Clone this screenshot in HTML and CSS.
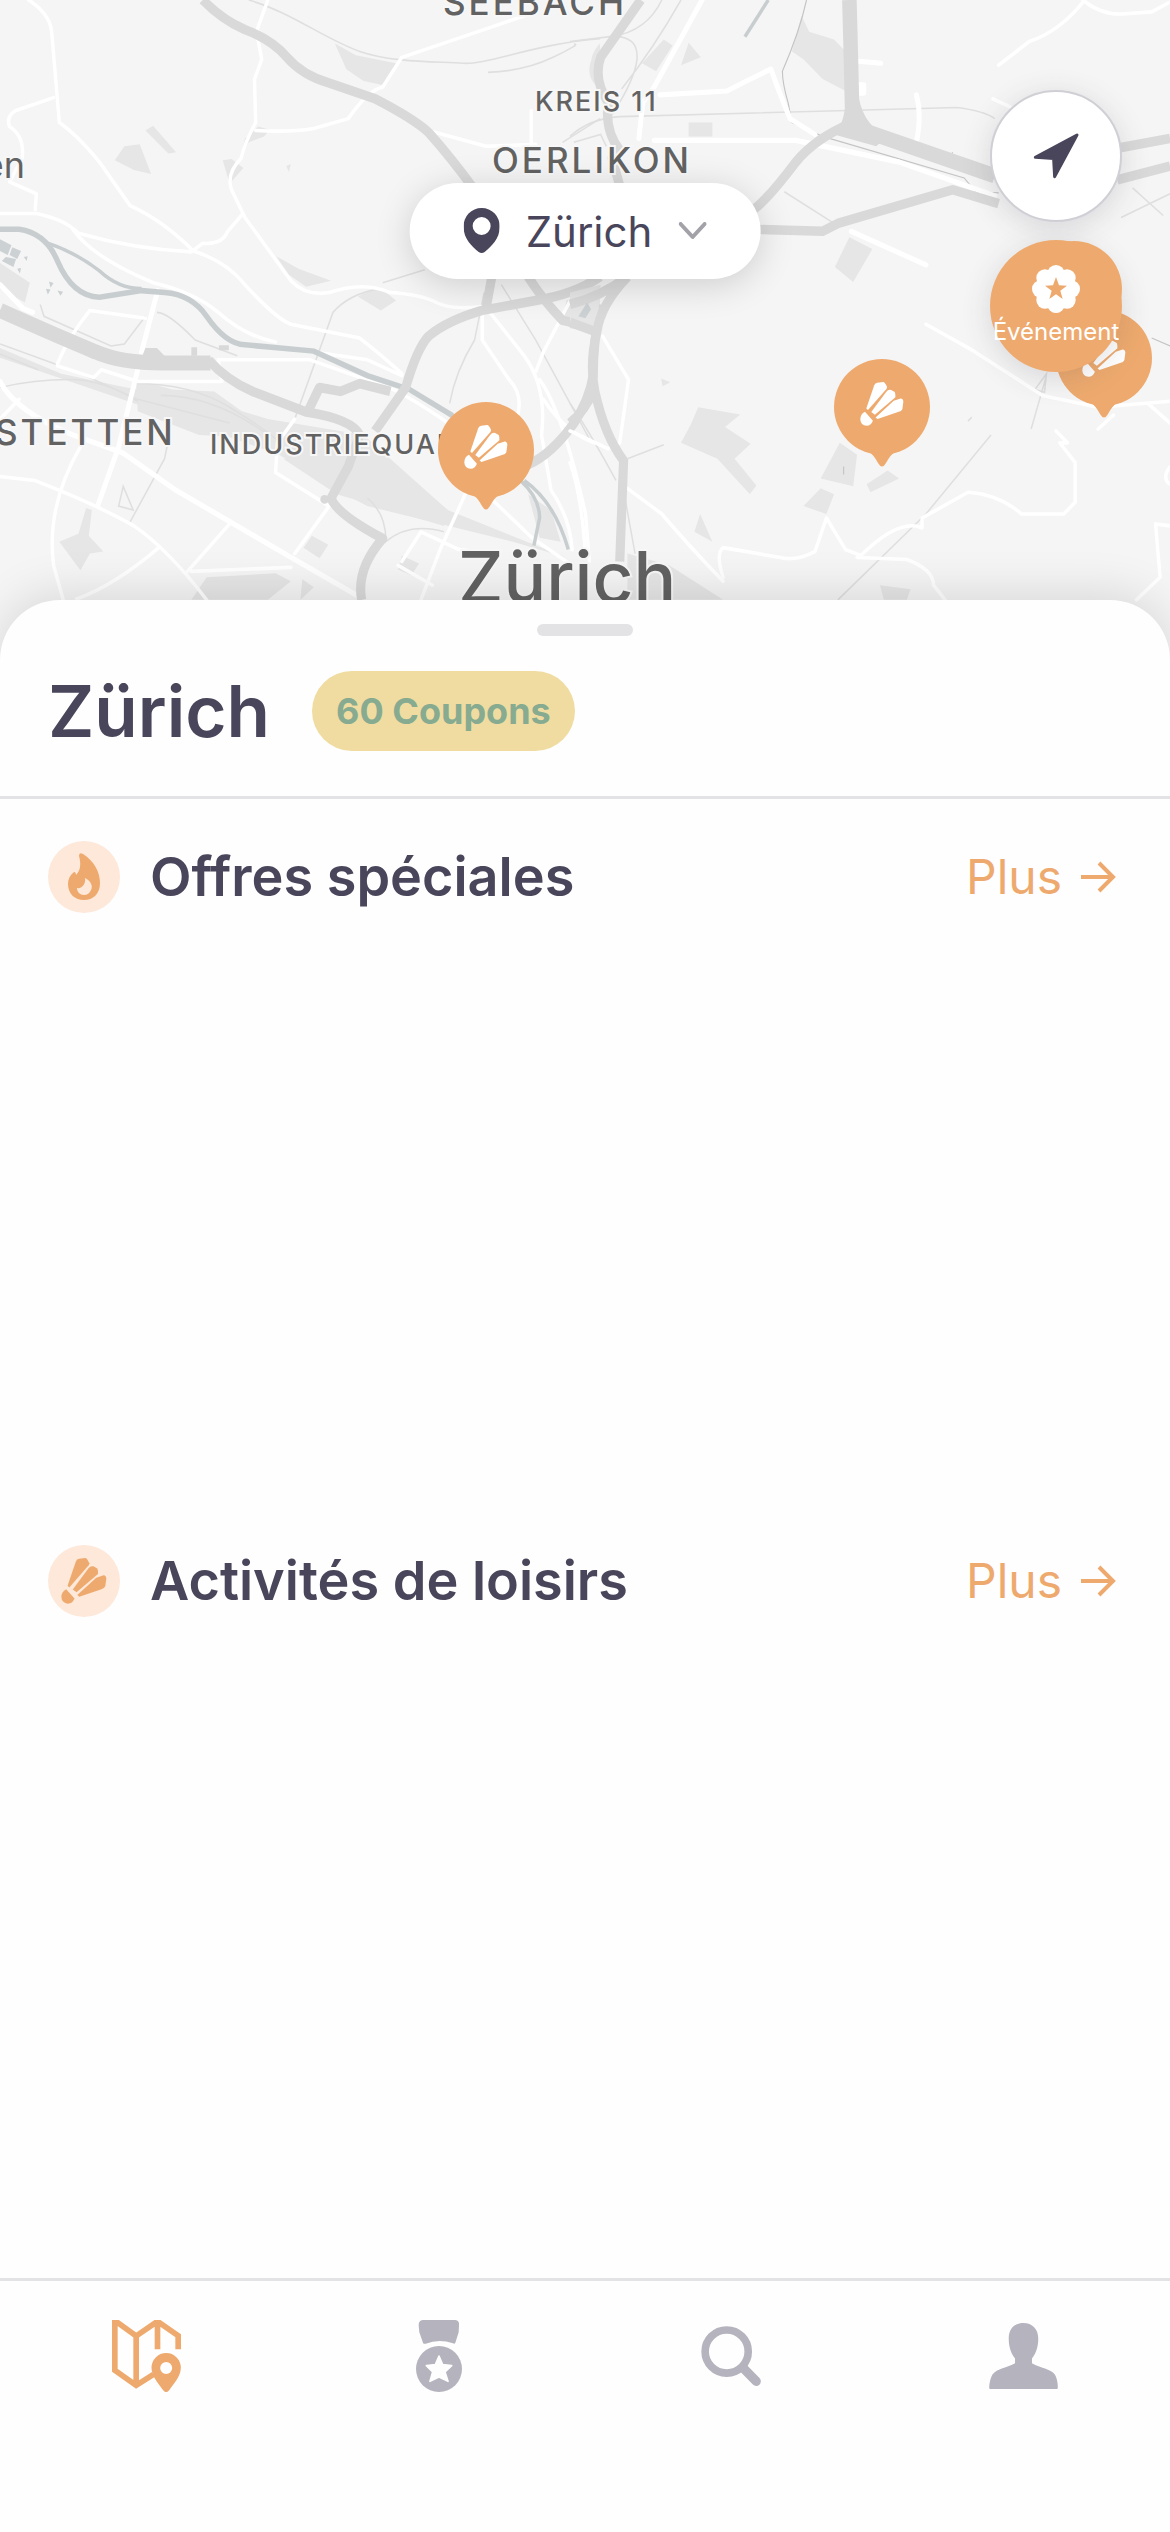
FILE: index.html
```html
<!DOCTYPE html>
<html lang="fr">
<head>
    <meta charset="UTF-8">
    <meta name="viewport" content="width=device-width, initial-scale=1.0">
    <title>Zürich</title>

    <link rel="stylesheet" href="styles.css">
</head>
<body>
    <!-- Shared icons -->
    <svg class="symbols" aria-hidden="true">
        <symbol id="shuttle" viewBox="134 137 131 133">
            <path d="M152 217 L176 147 Q179 140 185 139 L203 137 Q208 137 215 152 L213 158 L157 222 Z"/>
            <path d="M167 228 L212 167 Q218 159 227 161 L238 167 Q241 173 240 183 L178 236 Z"/>
            <path d="M180 244 L235 194 L256 187 Q264 188 264 197 L261 219 Q258 225 250 227 L186 249 Z"/>
            <path d="M148 227 L172 254 Q166 269 153 269 Q135 267 134 250 Q134 234 148 227 Z"/>
        </symbol>
        <symbol id="markerShape" viewBox="0 0 96 108">
            <circle cx="48" cy="48" r="48"/>
            <path d="M32 90 Q40 96 44 104 Q48 111 52 104 Q56 96 64 90 Z"/>
        </symbol>
        <symbol id="arrow" viewBox="0 0 36 32">
            <path d="M1 16 H33 M19 2 L33 16 L19 30" fill="none" stroke="currentColor" stroke-width="4"/>
        </symbol>
    </svg>

    <main class="mapArea">
        <svg class="map" viewBox="0 0 1170 660" preserveAspectRatio="xMidYMin slice" aria-label="Carte de Zürich">
            <!-- West side -->
            <g transform="scale(.3827 .3954)">
                <g class="area">
                    <path d="M875 110 L930 140 L1035 160 L1000 215 L950 205 L905 175 Z"/>
                    <path d="M300 405 L325 370 L365 365 L395 440 L350 430 Z M380 330 L400 318 L460 385 L440 388 Z"/>
                    <path d="M640 350 L675 320 L705 328 L690 345 L650 360 L632 388 Z M582 405 L605 402 L636 425 L600 465 Z M748 420 L760 415 L755 435 Z"/>
                    <path d="M722 648 L780 680 L865 710 L800 725 L755 695 Z M935 750 L990 725 L1035 760 L995 785 Z"/>
                    <path d="M0 665 L78 715 L65 765 L0 730 Z M0 880 L160 945 L330 980 L500 1000 L700 1060 L950 1100 L1170 1290 L1480 1410 L1340 1370 L1130 1320 L960 1280 L840 1220 L730 1150 L350 1020 L0 905 Z"/>
                    <path d="M355 960 L450 985 L560 990 L660 1060 L720 1110 L520 1100 L360 1040 Z M740 1160 L900 1175 L1050 1200 L1170 1290 L1160 1330 L880 1250 Z"/>
                    <path d="M225 1285 L240 1290 L232 1355 L270 1395 L235 1400 L210 1442 L155 1370 L205 1350 Z M815 1355 L858 1378 L835 1412 L793 1385 Z M1050 1405 L1095 1425 L1075 1455 L1040 1440 Z"/>
                    <path d="M500 1517 L540 1460 L720 1450 L760 1470 L700 1517 Z M790 1465 L820 1485 L785 1517 Z M1380 1250 L1440 1290 L1465 1370 L1410 1360 Z"/>
                    <path d="M1568 110 C1535 140 1535 200 1568 225 Z M1480 760 L1568 720 V840 L1470 820 Z"/>
                </g>
                <g class="rail">
                    <path d="M650 0 C760 30 850 100 940 130 S1150 155 1210 160 S1400 110 1568 98"/>
                    <path d="M1275 183 Q1370 180 1445 145 T1500 112 M1470 360 L1568 300 M1000 715 L1110 682"/>
                    <path d="M0 870 L200 940 L360 1010 L600 1070 M0 895 L100 935 M0 980 Q90 960 180 960 T360 1015 M105 770 L115 800 L290 875 L325 870 L380 800 M410 790 Q440 790 510 860 L620 900"/>
                    <path d="M350 970 Q500 970 600 1030 T720 1110 M420 1000 Q560 1000 700 1100 M770 1060 L870 790 Q910 745 990 730 M1175 1020 Q1190 940 1240 860 L1265 740 M1310 720 L1400 860 L1540 1110 M445 1090 L430 1160 L340 1320 M960 1260 Q1010 1300 1008 1370 Q1070 1320 1160 1345"/>
                    <path d="M322 1230 L348 1290 L310 1280 Z"/>
                </g>
                <g class="road">
                    <path d="M75 0 Q130 35 135 80 L155 310 Q200 340 260 410 L340 520 Q430 560 505 635 Q590 660 640 720 Q720 805 760 820 L940 855 Q1000 900 1050 945"/>
                    <path d="M140 247 L40 280 Q15 295 25 320 Q65 345 58 400 L25 460 L95 490 L92 530"/>
                    <path d="M700 0 L670 80 L684 150 L665 200 L668 310 Q640 360 630 400 Q590 440 605 480 L640 550 L760 710 Q800 750 860 740 Q950 710 1020 740 Q1100 745 1140 765 T1260 775"/>
                    <path d="M668 330 Q760 335 820 325 L910 300 Q960 230 1000 220 L1050 145 L1280 70 L1370 40 M1100 325 L1270 370 L1400 365 M1388 280 V370"/>
                    <path d="M0 540 H95 Q170 555 205 590 Q350 630 500 637 L530 615 Q580 620 595 585 L635 540"/>
                    <path d="M190 580 Q240 650 400 715 Q510 740 570 790 Q640 850 720 865 M820 890 L960 910 L1050 950"/>
                    <path class="wide" d="M412 735 L370 890 M370 895 L310 1130 L255 1280 M0 720 L60 780 L85 790"/>
                    <path d="M150 920 Q180 850 235 785 L380 805 M150 925 L245 955 L265 935 L360 965 H580 L570 910 H810 Q930 950 1040 990 Q1150 1050 1240 1120"/>
                    <path class="wide" d="M0 965 Q40 1040 190 1100 L320 1145 L460 1240 L770 1415 L940 1510"/>
                    <path d="M0 1205 L90 1215 Q250 1275 350 1330 Q440 1390 540 1517 M210 1130 Q120 1280 140 1430 L165 1517 M200 1515 Q300 1480 415 1385 M500 1445 L760 1435 M490 1445 L600 1325 M770 1400 L860 1280 L720 1195 L725 1120 L770 1060"/>
                    <path d="M1225 1230 L1150 1390 L1100 1517 M1050 1420 L1100 1345 L1200 1390 L1290 1400 M1040 1430 L1130 1480 M1250 1230 L1390 1360 L1480 1420 M0 1060 L50 1010"/>
                    <path d="M1260 790 L1260 860 L1330 960 Q1370 1000 1350 1060 M1280 790 L1370 900 Q1430 980 1415 1100 L1440 1240 Q1490 1310 1495 1390 M1490 760 L1420 890 L1400 940 M1410 960 Q1470 1040 1530 1300 L1540 1420 M1420 1010 Q1480 1100 1568 1125"/>
                </g>
                <g class="water">
                    <path class="river" d="M0 580 H50 Q120 590 150 660 Q190 750 260 752 L370 735 L430 740 Q500 745 540 800 Q590 870 640 872 L820 888 L960 950 L1070 985 L1180 1050 Q1290 1130 1360 1215"/>
                    <path d="M125 615 Q200 640 260 685 Q310 730 370 730 M1360 1215 Q1410 1260 1410 1310 L1395 1380 M1370 1215 Q1450 1270 1485 1390" class="branch"/>
                    <path class="pond" d="M0 605 L30 620 L20 645 L0 635 Z M32 625 L55 635 L45 655 L25 645 Z M15 650 L42 655 L35 675 L5 660 Z M62 650 L72 648 L70 660 Z M45 680 L55 678 L52 692 Z M128 712 L140 716 L132 728 Z M120 730 L132 732 L125 745 Z M150 735 L165 738 L158 748 Z M1525 775 L1542 785 L1520 805 Z"/>
                </g>
                <g class="motorway">
                    <path class="big" d="M530 0 Q580 50 640 75 Q710 100 750 145 Q790 190 860 210 L980 250 Q1080 300 1120 335 Q1180 400 1240 480"/>
                    <path class="huge" d="M0 785 Q150 850 250 890 Q320 920 440 918 H550"/>
                    <path class="big" d="M545 910 Q590 960 660 990 L800 1042 Q920 1060 940 1100 L910 1180 L865 1260 Q880 1300 1000 1362 Q930 1440 945 1517"/>
                    <path class="big" d="M805 1040 L835 980 L890 990 L940 970 L1020 990 M980 1090 L1060 980 Q1090 880 1120 850 Q1170 810 1260 785 L1400 760 Q1500 745 1568 700 M1285 700 L1270 780 M1380 700 Q1420 760 1470 810 L1568 830 M1568 770 Q1550 870 1550 950 Q1540 1010 1500 1070 Q1440 1150 1380 1175"/>
                    <circle cx="848" cy="1263" r="11"/>
                    <path d="M380 880 L410 880 L435 905 H370 Z M500 878 H515 V900 H500 Z M572 873 H598 V886 H572 Z"/>
                </g>
            </g>

            <!-- East side -->
            <g transform="translate(570) scale(.3827 .3954)">
                <g class="area">
                    <path d="M605 40 L625 80 L690 100 L720 130 V230 L660 200 L610 150 L580 130 Z M245 100 L268 115 L225 180 L188 160 Z M310 108 L342 145 L290 165 Z M310 310 H372 V345 H310 Z"/>
                    <path d="M730 600 L790 630 L740 713 L692 675 Z M335 1030 L445 1048 L405 1080 L472 1122 L430 1160 L487 1228 L470 1250 L385 1160 L290 1120 L315 1075 Z"/>
                    <path d="M705 1120 L750 1150 L740 1230 L655 1210 Z M775 1225 L830 1190 L860 1210 L785 1245 Z M655 1235 L690 1250 L670 1300 L610 1280 Z M340 1300 L372 1370 L325 1345 Z M810 1480 L890 1490 L880 1517 H820 Z"/>
                    <path d="M75 130 C45 150 40 200 75 220 Z M0 740 L80 720 L70 840 L0 830 Z M238 957 L262 967 L242 977 Z M150 1400 L260 1430 L400 1517 H150 Z"/>
                </g>
                <g class="rail">
                    <path d="M0 105 L110 92 Q200 80 240 0 M290 0 Q220 120 135 225 M110 92 Q180 90 175 150 Q170 200 110 290 M0 345 Q50 300 130 295 L700 280 L1010 272 Q1080 280 1110 300 M10 360 L80 340 L95 370 M560 485 L690 565"/>
                    <path d="M700 1517 L930 1300 L1100 1100 M1205 1085 L1245 950 M1245 945 L1215 985 L1240 992 Z M1440 550 L1568 490 M1470 475 L1550 545 M0 1020 Q50 1090 120 1215 M150 1160 L245 1125 M1040 1065 L1050 1055 M140 1240 L170 1400"/>
                    <path class="dark" d="M618 0 Q600 80 555 180 Q555 210 570 260 L580 310 L660 345 L1030 450 L1060 485 L1120 488 M1520 855 L1568 875 M1000 385 L990 400 M715 1180 V1200"/>
                </g>
                <g class="road">
                    <path class="wide" d="M345 0 L220 220 L190 260 L180 350 M235 240 L410 230 Q470 200 525 175 Q545 230 575 300 L640 340"/>
                    <path class="wide" d="M220 355 L590 355 L860 410 L1110 495 M905 240 Q920 290 905 360 M755 155 L812 160 M735 585 L930 670"/>
                    <path d="M1345 0 Q1280 80 1200 105 L1120 165 M1340 0 Q1390 40 1450 35 L1520 30 L1568 5 M1105 250 L1150 270"/>
                    <path d="M930 820 L1050 885 L1235 1000 L1380 1030 L1568 1015 M1510 1020 L1568 1070 M1380 1085 L1420 1050 M1270 1090 L1300 1120 L1280 1120 L1320 1170 V1270 L1290 1300 H1180 Q1120 1250 1040 1245 L920 1310 V1335 Q860 1310 760 1405 L720 1390 L670 1310 L640 1395 Q590 1420 550 1410 L400 1385 Q380 1400 400 1460 M750 1410 L880 1415 Q950 1440 950 1480 L980 1517"/>
                    <path d="M0 1090 L100 1135 L130 1120 L153 960 L85 850 M0 1170 Q30 1250 40 1400 M150 1235 L240 1300 Q310 1380 400 1470 M1568 1330 L1530 1325 L1542 1460 L1480 1517 M1568 1180 Q1545 1210 1568 1225"/>
                    <rect x="748" y="208" width="26" height="34" rx="6" class="block"/>
                </g>
                <g class="motorway">
                    <path class="big" d="M185 0 Q120 90 80 145 Q60 200 100 260 Q90 330 130 380 L110 400 L130 470"/>
                    <path class="huge" d="M730 0 Q735 170 738 320 L1110 445"/>
                    <path class="big" d="M738 310 Q640 350 590 410 Q520 500 480 530 M480 580 L660 585 L700 565 L1000 480 L1120 515"/>
                    <path d="M722 250 L755 250 Q770 320 830 345 L800 370 L690 340 Q715 320 722 250 Z"/>
                    <path class="big" d="M1430 375 L1568 350 M1430 455 L1568 420"/>
                    <path class="big" d="M0 770 Q80 750 150 700 M150 700 Q80 770 70 840 Q50 920 65 990 Q90 1100 140 1165 L130 1420 M70 840 L0 815 M65 980 Q40 1040 0 1070"/>
                </g>
                <g class="water">
                    <path d="M518 0 L457 93" class="branch"/>
                    <path class="pond" d="M45 765 L55 782 L40 805 L22 800 Z"/>
                </g>
            </g>

            <g class="mapLabels">
                <text x="443" y="15" class="district">SEEBACH</text>
                <text x="535" y="111" class="quarter">KREIS 11</text>
                <text x="492" y="173" class="district">OERLIKON</text>
                <text x="-5" y="445" class="district">STETTEN</text>
                <text x="25" y="178" class="town" text-anchor="end">en</text>
                <text x="210" y="454" class="quarter">INDUSTRIEQUAR</text>
                <text x="458" y="603" class="city">Zürich</text>
            </g>
        </svg>

        <button class="marker markerIndustrie" aria-label="Activité de loisirs">
            <svg class="markerBack"><use href="#markerShape"/></svg>
            <svg class="markerIcon"><use href="#shuttle"/></svg>
        </button>
        <button class="marker markerForest" aria-label="Activité de loisirs">
            <svg class="markerBack"><use href="#markerShape"/></svg>
            <svg class="markerIcon"><use href="#shuttle"/></svg>
        </button>
        <button class="marker markerEast" aria-label="Activité de loisirs">
            <svg class="markerBack"><use href="#markerShape"/></svg>
            <svg class="markerIcon"><use href="#shuttle"/></svg>
        </button>

        <button class="cityPicker">
            <svg class="pinIcon" viewBox="0 0 36 46">
                <path fill-rule="evenodd" d="M18 0 A18 18 0 0 1 36 19 C36 31 28 38 21 44 Q18 46 15 44 C8 38 0 31 0 19 A18 18 0 0 1 18 0 Z M18 9 A9 9 0 1 0 18 27 A9 9 0 1 0 18 9 Z"/>
            </svg>
            <span>Zürich</span>
            <svg class="chevron" viewBox="0 0 28 18">
                <path d="M2 2 L14 15 L26 2"/>
            </svg>
        </button>

        <div class="mapButtons">
            <button class="roundButton locate" aria-label="Ma position">
                <svg class="locateIcon" viewBox="220 190 136 136">
                    <path d="M350 196 L284 319 L281 265 L227 262 Z"/>
                </svg>
            </button>
            <button class="roundButton event">
                <svg class="eventIcon" viewBox="-72 -72 144 144">
                    <circle r="60"/>
                    <circle cx="0" cy="-46" r="26"/>
                    <circle cx="33" cy="-33" r="26"/>
                    <circle cx="46" cy="0" r="26"/>
                    <circle cx="33" cy="33" r="26"/>
                    <circle cx="0" cy="46" r="26"/>
                    <circle cx="-33" cy="33" r="26"/>
                    <circle cx="-46" cy="0" r="26"/>
                    <circle cx="-33" cy="-33" r="26"/>
                    <path class="eventStar" d="M0 -36 L9 -11 L33 -10 L13 5 L20 30 L0 16 L-20 30 L-13 5 L-33 -10 L-9 -11 Z"/>
                </svg>
                <span>Événement</span>
            </button>
        </div>
    </main>

    <div class="sheet">
        <div class="handle"></div>
        <header class="sheetHeader">
            <h1>Zürich</h1>
            <span class="badge">60 Coupons</span>
        </header>

        <section class="category">
            <div class="categoryHeader">
                <span class="categoryIcon">
                    <svg class="flame" viewBox="0 0 72 72">
                        <path fill-rule="evenodd" d="M31 15 Q31 11 35 13 C46 20 52 31 52 42 C52 53 45 59 36 59 C26 59 20 52 20 43 C20 38 22 34 26 31 Q28 31 28 34 C33 29 33 22 31 15 Z M37 37 C43 40 45 45 43 49 C42 52 39 54 36 54 C32 54 29 51 29 47 C34 48 38 43 37 37 Z"/>
                    </svg>
                </span>
                <h2>Offres spéciales</h2>
                <a class="more" href="#">Plus <svg class="arrow"><use href="#arrow"/></svg></a>
            </div>
        </section>

        <section class="category">
            <div class="categoryHeader">
                <span class="categoryIcon">
                    <svg class="categoryShuttle"><use href="#shuttle"/></svg>
                </span>
                <h2>Activités de loisirs</h2>
                <a class="more" href="#">Plus <svg class="arrow"><use href="#arrow"/></svg></a>
            </div>
        </section>
    </div>

    <nav class="tabBar">
        <a class="tab active" href="#" aria-label="Carte">
            <svg width="69" height="72" viewBox="66 90 206 216">
                <path class="line" d="M74 80 V241 L138 286 L190 253 M66 86 L138 138 V286 M138 138 L202 94 V178 M202 94 L264 137 V178"/>
                <path fill-rule="evenodd" d="M228 189 A44 44 0 0 1 272 234 C271 262 249 282 237 301 Q228 312 219 301 C207 282 185 262 184 234 A44 44 0 0 1 228 189 Z M228 216 A18 18 0 1 0 228 252 A18 18 0 1 0 228 216 Z"/>
            </svg>
        </a>
        <a class="tab" href="#" aria-label="Récompenses">
            <svg width="46" height="72" viewBox="978 90 138 216">
                <path d="M998 90 H1096 Q1109 92 1107 106 L1106 127 L1096 158 Q1094 163 1089 160 Q1047 145 1007 161 Q1001 163 999 158 L988 127 L986 106 Q986 91 998 90 Z"/>
                <circle cx="1047" cy="237" r="69"/>
                <path class="star" d="M1047 198 L1058 224 L1085 227 L1065 246 L1074 274 L1047 261 L1020 274 L1028 246 L1009 227 L1036 224 Z"/>
            </svg>
        </a>
        <a class="tab" href="#" aria-label="Recherche">
            <svg width="60" height="60" viewBox="93 107 180 181">
                <circle class="lens" cx="170" cy="184" r="65"/>
                <path class="lensHandle" d="M222 236 L259 274"/>
            </svg>
        </a>
        <a class="tab" href="#" aria-label="Profil">
            <svg width="69" height="66" viewBox="960 98 207 199">
                <path d="M1063 98 C1090 98 1108 116 1108 145 C1108 171 1101 190 1089 205 V219 C1115 234 1145 235 1158 253 Q1167 268 1167 293 Q1167 297 1163 297 H964 Q960 297 960 293 Q961 268 970 253 C983 235 1015 232 1038 219 V205 C1026 190 1019 171 1019 145 C1019 116 1036 98 1063 98 Z"/>
            </svg>
        </a>
    </nav>
</body>
</html>
```
FILE: styles.css
```css
*{
    box-sizing: border-box;
}

body{
    margin: 0;
    min-height: 100vh;
    display: flex;
    flex-direction: column;
    background: #fefefe;
    color: #49465b;
    font-family: Inter, Roboto, sans-serif;
}

button{
    border: none;
    padding: 0;
    font-family: inherit;
    color: inherit;
    cursor: pointer;
}

a{
    text-decoration: none;
}

.symbols{
    position: absolute;
    width: 0;
    height: 0;
}

/* Map */
.mapArea{
    position: relative;
    height: 660px;
    overflow: hidden;
    background: #f5f5f5;
}

.map{
    display: block;
    width: 100%;
    height: 100%;
}

.area{
    fill: #e6e6e6;
}

.rail{
    fill: none;
    stroke: #dfdfdf;
    stroke-width: 4px;
}

.rail .dark{
    stroke: #c4c4c4;
    stroke-width: 3px;
}

.road{
    fill: none;
    stroke: #ffffff;
    stroke-width: 9px;
    stroke-linejoin: round;
    stroke-linecap: round;
}

.road .wide{
    stroke-width: 13px;
}

.road .block{
    fill: #ffffff;
    stroke: none;
}

.motorway{
    fill: #d9d9d9;
}

.motorway .big{
    fill: none;
    stroke: #d9d9d9;
    stroke-width: 24px;
    stroke-linejoin: round;
}

.motorway .huge{
    fill: none;
    stroke: #d9d9d9;
    stroke-width: 38px;
}

.water{
    fill: none;
    stroke: #c8ced0;
}

.water .river{
    stroke-width: 14px;
}

.water .branch{
    stroke-width: 9px;
}

.water .pond{
    fill: #ccd1d3;
    stroke: none;
}

.mapLabels{
    fill: #626262;
    stroke: #f7f7f7;
    stroke-width: 4px;
    paint-order: stroke;
    font-weight: 500;
}

.district{
    font-size: 35px;
    letter-spacing: 3px;
}

.quarter{
    font-size: 27px;
    letter-spacing: 2px;
}

.town{
    font-size: 36px;
    font-weight: 400;
}

.city{
    font-size: 71px;
}

.marker{
    position: absolute;
    width: 96px;
    height: 108px;
    background: none;
}

.markerBack{
    display: block;
    width: 96px;
    height: 108px;
    fill: #eeaa6e;
}

.markerIcon{
    position: absolute;
    left: 26px;
    top: 23px;
    width: 44px;
    height: 44px;
    fill: #ffffff;
}

.markerIndustrie{
    left: calc(50% - 147px);
    top: 402px;
}

.markerForest{
    left: calc(50% + 249px);
    top: 359px;
}

.markerEast{
    left: calc(50% + 471px);
    top: 310px;
}

.cityPicker{
    position: absolute;
    top: 183px;
    left: 50%;
    transform: translateX(-50%);
    display: flex;
    align-items: center;
    height: 96px;
    padding: 0 54px;
    border-radius: 48px;
    background: #ffffff;
    box-shadow: 0 6px 36px rgba(0, 0, 0, 0.16);
    font-size: 42px;
    gap: 26px;
}

.pinIcon{
    width: 36px;
    height: 46px;
    fill: #49465b;
}

.chevron{
    width: 28px;
    height: 18px;
    fill: none;
    stroke: #a3a2a8;
    stroke-width: 4px;
    stroke-linecap: round;
    stroke-linejoin: round;
}

.mapButtons{
    position: absolute;
    top: 90px;
    right: 48px;
    display: flex;
    flex-direction: column;
    gap: 18px;
}

.roundButton{
    display: flex;
    flex-direction: column;
    align-items: center;
    justify-content: center;
    width: 132px;
    height: 132px;
    border-radius: 50%;
    box-shadow: 0 6px 30px rgba(60, 60, 80, 0.16);
}

.locate{
    border: 2px solid #cfcfd5;
    background: #ffffff;
}

.locateIcon{
    width: 46px;
    height: 46px;
    fill: #49465b;
    stroke: #49465b;
    stroke-width: 9px;
    stroke-linejoin: round;
}

.event{
    position: relative;
    isolation: isolate;
    background: #eeaa6e;
    color: #ffffff;
    font-size: 24px;
    line-height: 30px;
    gap: 4px;
}

/* Top of the pin that sits under the event button */
.event::before{
    content: "";
    position: absolute;
    z-index: -1;
    top: 1px;
    right: 0;
    width: 96px;
    height: 96px;
    border-radius: 50%;
    background: #eeaa6e;
}

.eventIcon{
    width: 48px;
    height: 48px;
    fill: #ffffff;
}

.eventStar{
    fill: #eeaa6e;
}

/* Bottom sheet */
.sheet{
    position: relative;
    flex: 1;
    margin-top: -60px;
    border-radius: 60px 60px 0 0;
    background: #fefefe;
    box-shadow: 0 -6px 48px rgba(0, 0, 0, 0.12);
}

.handle{
    width: 96px;
    height: 12px;
    margin: 0 auto;
    position: relative;
    top: 24px;
    border-radius: 6px;
    background: #e3e3e5;
}

.sheetHeader{
    display: flex;
    align-items: center;
    gap: 42px;
    height: 187px;
    padding: 38px 48px 24px;
    border-bottom: 3px solid #e3e3e5;
}

h1{
    margin: 0;
    font-size: 71px;
    font-weight: 600;
    line-height: 84px;
}

.badge{
    padding: 0 24px;
    border-radius: 40px;
    background: #f0dca0;
    color: #86ab90;
    font-size: 36px;
    font-weight: 700;
    line-height: 80px;
}

.category{
    height: 704px;
    padding: 42px 54px 0 48px;
}

.categoryHeader{
    display: flex;
    align-items: center;
    gap: 30px;
}

.categoryIcon{
    display: flex;
    align-items: center;
    justify-content: center;
    width: 72px;
    height: 72px;
    border-radius: 50%;
    background: #fde8d9;
    fill: #eeaa6e;
}

.flame{
    width: 72px;
    height: 72px;
}

.categoryShuttle{
    width: 46px;
    height: 46px;
}

h2{
    flex: 1;
    margin: 0;
    font-size: 54px;
    font-weight: 600;
    line-height: 72px;
    font-variant-ligatures: none;
}

.more{
    display: flex;
    align-items: center;
    gap: 18px;
    color: #eeaa6e;
    font-size: 48px;
    line-height: 72px;
}

.arrow{
    width: 36px;
    height: 32px;
}

/* Tabs */
.tabBar{
    position: relative;
    display: flex;
    height: 254px;
    border-top: 3px solid #e3e3e5;
    background: #fefefe;
}

.tab{
    flex: 1;
    display: flex;
    align-items: center;
    justify-content: center;
    height: 150px;
    fill: #b5b3bd;
}

.active{
    fill: #eeaa6e;
}

.line{
    fill: none;
    stroke: #eeaa6e;
    stroke-width: 17px;
}

.star{
    fill: #fefefe;
    stroke: #fefefe;
    stroke-width: 5px;
    stroke-linejoin: round;
}

.lens{
    fill: none;
    stroke: #b5b3bd;
    stroke-width: 23px;
}

.lensHandle{
    stroke: #b5b3bd;
    stroke-width: 28px;
    stroke-linecap: round;
}
```
